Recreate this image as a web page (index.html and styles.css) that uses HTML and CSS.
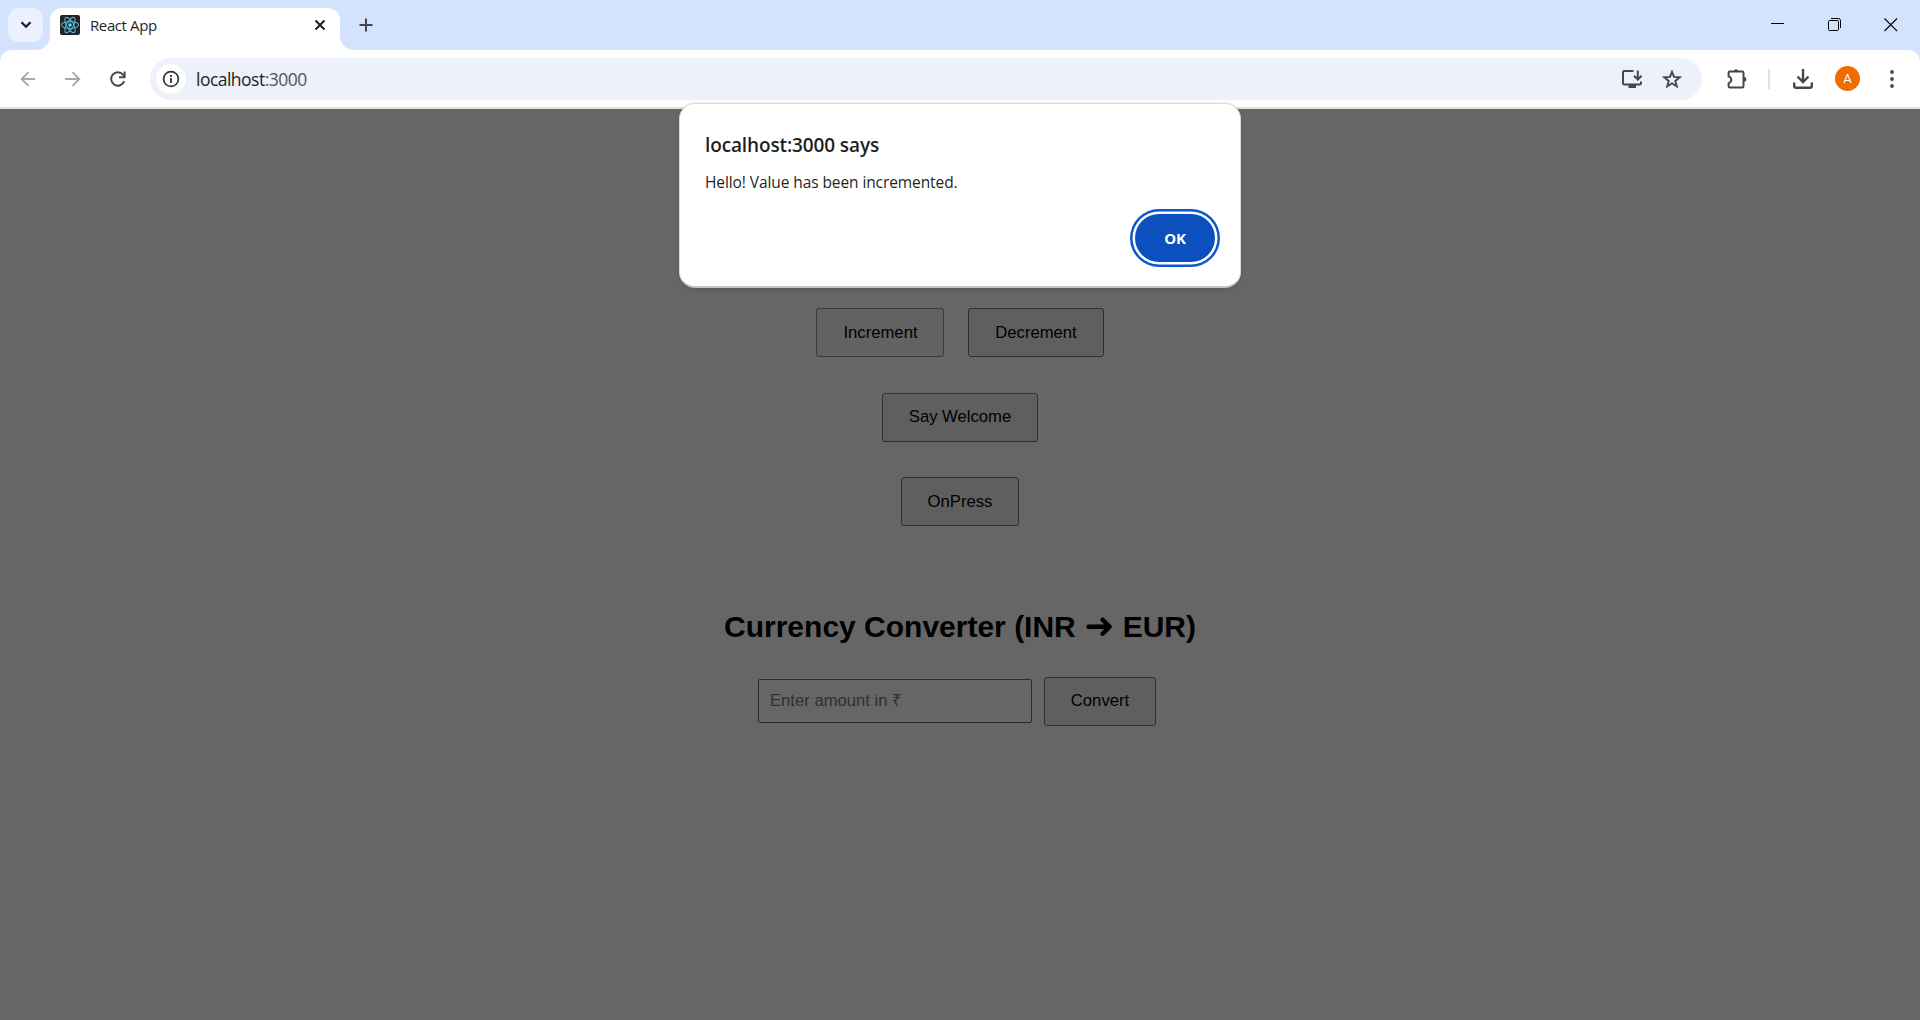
FILE: index.html
```html
<!DOCTYPE html>
<html lang="en">
<head>
<meta charset="utf-8">
<title>React App</title>
<link rel="stylesheet" href="styles.css">
</head>
<body>
<header class="tabstrip">
  <button class="tab-search" aria-label="Search tabs"><svg width="12" height="8" viewBox="0 0 12 8"><path d="M1.500 1.200 6 5.700l4.500-4.500" fill="none" stroke="#1f1f1f" stroke-width="2.300"/></svg></button>
  <div class="tab">
    <svg class="favicon" width="20" height="20" viewBox="0 0 20 20"><rect width="20" height="20" rx="2" fill="#222"/><g fill="none" stroke="#4fb3cb" stroke-width="1.100"><ellipse cx="10" cy="10" rx="8.600" ry="3.400"/><ellipse cx="10" cy="10" rx="8.600" ry="3.400" transform="rotate(60 10 10)"/><ellipse cx="10" cy="10" rx="8.600" ry="3.400" transform="rotate(120 10 10)"/></g><circle cx="10" cy="10" r="1.800" fill="#61dafb"/></svg>
    <span class="tab-title">React App</span>
    <svg width="12" height="12" viewBox="0 0 12 12"><path d="M1.500 1.500l9 9M10.500 1.500l-9 9" stroke="#1f1f1f" stroke-width="2"/></svg>
  </div>
  <svg class="new-tab" width="14" height="14" viewBox="0 0 14 14"><path d="M7 .5v13M.5 7h13" stroke="#474747" stroke-width="2"/></svg>
  <div class="window-controls">
    <svg width="14" height="14" viewBox="0 0 14 14"><path d="M0 5.500h13" stroke="#000"/></svg>
    <svg width="14" height="14" viewBox="0 0 14 14"><g fill="none" stroke="#000"><rect x=".5" y="2.500" width="10" height="10" rx="1"/><path d="M3 .5h7.500a2 2 0 0 1 2 2V10"/></g></svg>
    <svg width="14" height="14" viewBox="0 0 14 14"><path d="M.5.500l12.500 12.500M13 .5.500 13" stroke="#000" stroke-width="1.100"/></svg>
  </div>
</header>
<nav class="toolbar">
  <svg class="back" width="16" height="16" viewBox="0 0 16 16"><path d="M15 8H2M8.500 1.200 1.700 8l6.800 6.800" fill="none" stroke="#a8a8a8" stroke-width="1.900"/></svg>
  <svg class="forward" width="16" height="16" viewBox="0 0 16 16"><path d="M0 8h14M7.500 1.200 14.300 8l-6.800 6.800" fill="none" stroke="#a8a8a8" stroke-width="1.900"/></svg>
  <svg class="reload" width="16" height="16" viewBox="0 0 16 16"><path d="M14.200 10.200A6.700 6.700 0 1 1 13 3.600L14.300 5" fill="none" stroke="#474747" stroke-width="2"/><path d="M14.600.5v5.700H9" fill="none" stroke="#474747" stroke-width="2"/></svg>
  <div class="omnibox">
    <span class="site-info"><svg width="18" height="18" viewBox="0 0 18 18"><circle cx="9" cy="9" r="7.400" fill="none" stroke="#333" stroke-width="1.700"/><path d="M9 8v5M9 5v2" stroke="#333" stroke-width="1.800"/></svg></span>
    <span class="url">localhost<span class="port">:3000</span></span>
    <svg class="install" width="22" height="20" viewBox="0 0 22 20"><path d="M12.500 2H3.200A1.200 1.200 0 0 0 2 3.200v11.100a1.200 1.200 0 0 0 1.200 1.200h15.600a1.200 1.200 0 0 0 1.200-1.200V12.500M16.800 1.500V10M13 6.700l3.800 3.800 3.800-3.800" fill="none" stroke="#474747" stroke-width="2"/><path d="M7.500 15.500h7.500V19H7.500z" fill="#474747"/></svg>
    <svg class="star" width="20" height="20" viewBox="0 0 20 20"><path d="M10 2.800l2 5.100 5.700.4-4.400 3.600 1.500 5.500-4.800-3.100-4.800 3.100 1.500-5.500-4.400-3.600 5.700-.4z" fill="none" stroke="#474747" stroke-width="1.900"/></svg>
  </div>
  <svg class="extensions" width="22" height="22" viewBox="0 0 22 22"><path d="M3.800 3.500h12.500a1.200 1.200 0 0 1 1.200 1.200v13.600a1.200 1.200 0 0 1-1.200 1.200H3.800a1.200 1.200 0 0 1-1.200-1.200v-3c3.600-1.600 3.600-5.400 0-7V4.700a1.200 1.200 0 0 1 1.200-1.200z" fill="none" stroke="#474747" stroke-width="2"/><path d="M7.700 3.500a2.300 2.300 0 0 1 4.600 0zM18 9a2.400 2.400 0 0 1 0 4.800z" fill="#474747"/></svg>
  <span class="divider"></span>
  <svg class="download" width="20" height="20" viewBox="0 0 20 20"><path d="M10 0v13M4.500 7.500 10 13l5.500-5.500M1.200 13.500V17A1.800 1.800 0 0 0 3 18.800h14a1.800 1.800 0 0 0 1.800-1.800v-3.500" fill="none" stroke="#474747" stroke-width="2.400"/></svg>
  <span class="avatar">A</span>
  <svg class="menu" width="4" height="18" viewBox="0 0 4 18"><g fill="#474747"><circle cx="2" cy="2" r="1.900"/><circle cx="2" cy="9" r="1.900"/><circle cx="2" cy="16" r="1.900"/></g></svg>
</nav>
<main class="page">
  <div class="counter"><button class="btn increment">Increment</button><button class="btn decrement">Decrement</button></div>
  <button class="btn welcome">Say Welcome</button>
  <button class="btn press">OnPress</button>
  <h2>Currency Converter (INR <span class="arrow">➜</span> EUR)</h2>
  <div class="converter"><input class="amount" placeholder="Enter amount in ₹"><button class="btn convert">Convert</button></div>
</main>
<section class="dialog" role="alertdialog">
  <h1>localhost:3000 says</h1>
  <p>Hello! Value has been incremented.</p>
  <button class="ok">OK</button>
</section>
</body>
</html>
```
FILE: styles.css
```css
* { box-sizing: border-box; }
body { margin: 0; height: 1020px; overflow: hidden; display: flex; flex-direction: column; background: #666; font-family: "Open Sans", sans-serif; color: #1f1f1f; }
svg { display: block; flex: none; }
button { margin: 0; padding: 0; border: 0; font: inherit; }

.tabstrip { height: 50px; flex: none; display: flex; background: #d3e3fd; padding: 8px 0 0 8px; }
.tab-search { width: 35px; height: 34px; border-radius: 11px; background: #ebf1fe; display: grid; place-items: center; }
.tab { position: relative; width: 290px; height: 42px; margin-left: 7px; padding: 0 14px 8px 10px; display: flex; align-items: center; background: #fff; border-radius: 12px 12px 0 0; }
.tab::before, .tab::after { content: ""; position: absolute; bottom: 0; width: 14px; height: 14px; }
.tab::before { left: -14px; background: radial-gradient(circle at 0 0, transparent 13.5px, #fff 14.5px); }
.tab::after { right: -14px; background: radial-gradient(circle at 100% 0, transparent 13.5px, #fff 14.5px); }
.tab-title { flex: 1; margin-left: 10px; font-size: 15px; line-height: 20px; letter-spacing: -.4px; }
.new-tab { margin: 10px 0 0 19px; }
.window-controls { display: flex; gap: 42px; margin: 10px 22px 0 auto; }
.window-controls svg:first-child { margin-right: 1px; margin-left: -1px; }

.toolbar { height: 59px; flex: none; display: flex; align-items: center; background: #fff; border-bottom: 2px solid #dfe1df; border-radius: 12px 12px 0 0; box-shadow: 0 -12px 0 12px #d3e3fd; clip-path: inset(0); padding: 0 21px 0 20px; }
.forward { margin-left: 29px; }
.reload { margin-left: 29px; }
.omnibox { width: 1552px; height: 42px; margin-left: 24px; border-radius: 21px; background: #ecf1fa; display: flex; align-items: center; padding: 0 20px 0 6px; }
.site-info { width: 30px; height: 30px; border-radius: 50%; background: #fff; display: grid; place-items: center; }
.url { flex: 1; margin-left: 10px; padding-top: 1px; font-size: 17.5px; letter-spacing: -.52px; }
.port { color: #555; }
.install { margin-right: 19px; }
.extensions { margin-left: 24px; }
.divider { width: 2px; height: 20px; background: #d3e3fd; margin-left: 20px; }
.download { margin-left: 23px; }
.avatar { width: 25px; height: 25px; margin-left: 22px; border-radius: 50%; background: #ef6c00; color: #fff; font: 13px/26px Roboto, sans-serif; text-align: center; }
.menu { margin-left: auto; margin-right: 5px; }

.page { flex: 1; display: flex; flex-direction: column; align-items: center; padding-top: 199px; font-family: "Liberation Sans", Arial, sans-serif; color: #000; }
.btn { height: 49px; border: 1px solid #2f2f2f; border-radius: 3px; background: #5f5f5f; color: #000; font-size: 16.67px; }
.counter { display: flex; gap: 24px; }
.increment { width: 128px; background: #626262; border-color: #3b3b3b; padding-left: 1px; }
.decrement { width: 136px; }
.welcome { width: 156px; margin-top: 36px; padding-bottom: 2px; }
.press { width: 118px; margin-top: 35px; }
.page h2 { margin: 83px 0 0; font-size: 30px; line-height: 36px; white-space: nowrap; }
.arrow { display: inline-block; font-family: "DejaVu Sans", sans-serif; font-size: 36px; line-height: 30px; vertical-align: -1px; }
.converter { display: flex; align-items: flex-start; gap: 12px; margin: 32px 6px 0 0; }
.amount { width: 274px; height: 44px; margin-top: 2px; padding: 0 11px 1px; border: 1px solid #2b2b2b; border-radius: 2px; background: #666; font: 16.67px "Liberation Sans", Arial, sans-serif; }
.amount::placeholder { color: #303030; }
.convert { width: 112px; padding-bottom: 1px; }

.dialog { position: absolute; left: 679px; top: 103px; width: 562px; height: 185px; padding: 26px 25px 20px; display: flex; flex-direction: column; border: 1px solid #d9dcda; border-bottom: 2px solid #c0c4c2; border-radius: 16px; background: #fff; box-shadow: 0 1px 4px rgba(0,0,0,.15); }
.dialog h1 { margin: 0; font-size: 19px; line-height: 30px; font-weight: 600; letter-spacing: -.12px; }
.dialog p { margin: 10px 0 0; font-size: 15.5px; line-height: 24px; letter-spacing: -.09px; }
.ok { align-self: flex-end; flex: none; width: 80px; height: 48px; margin: 20px 0 0; border-radius: 24px; background: #0b50bd; color: #fff; font-size: 15px; font-weight: 700; letter-spacing: -.3px; box-shadow: 0 0 0 2.5px #fff, 0 0 0 5px #0b57d0; }
```
